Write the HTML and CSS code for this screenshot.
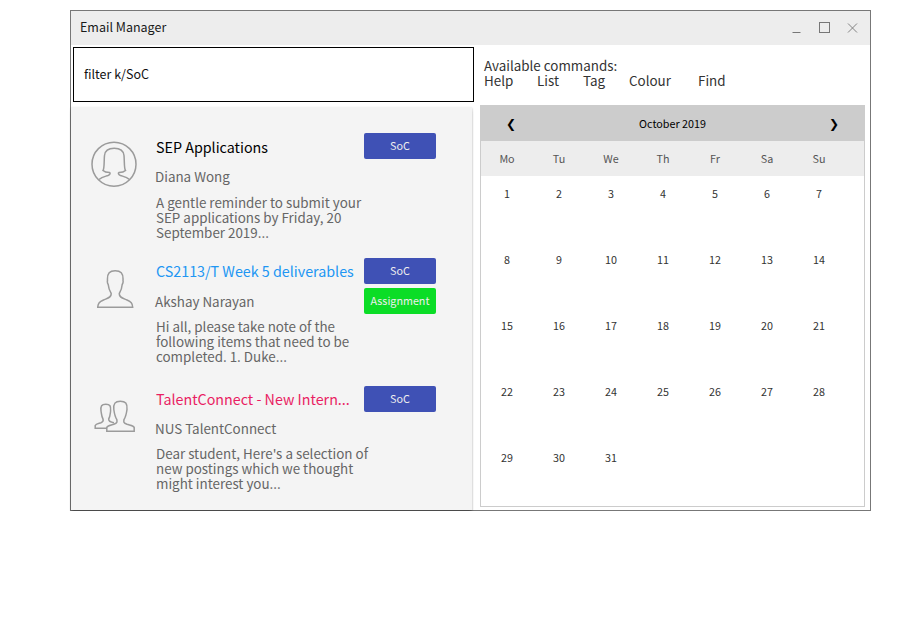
FILE: index.html
```
<!DOCTYPE html>
<html lang="en">
<head>
<meta charset="utf-8">
<title>Email Manager</title>
<link rel="stylesheet" href="styles.css">
</head>
<body>
<main class="window">
  <header class="titlebar">
    <span class="title">Email Manager</span>
    <svg class="controls" width="66" height="12" viewBox="0 0 66 12" fill="none" stroke="#777">
      <path d="M0.5 10.5H8.500"/>
      <rect x="27.500" y="0.500" width="10" height="10"/>
      <path d="M56 1.500L65 10.500M65 1.500L56 10.500" stroke-width="0.9"/>
    </svg>
  </header>
  <div class="content">
    <section class="left">
      <div class="command"><span>filter k/SoC</span></div>
      <div class="list">
        <article class="email first">
          <svg class="avatar round" width="46" height="46" viewBox="0 0 46 46">
            <circle cx="23" cy="23.200" r="22"/>
            <path d="M8 38.500C11 35.800 14 35.500 17 34.500C19.500 33.500 19.500 32 18.500 31.500Q14 31.500 12 29.500C13.500 28 13 19 13.500 14.500C14 9 17.500 7.200 23.200 7.200S32.500 9 33 14.500C33.500 19 33 28 34.500 29.500Q32.500 31.500 28 31.500C27 32 27 33.500 29.500 34.500C32.500 35.500 35.500 35.800 38.500 38.500"/>
          </svg>
          <div class="text">
            <h2>SEP Applications</h2>
            <p class="sender">Diana Wong</p>
            <p class="preview">A gentle reminder to submit your<br>SEP applications by Friday, 20<br>September 2019...</p>
          </div>
          <div class="tags"><span class="tag soc">SoC</span></div>
        </article>
        <article class="email second">
          <svg class="avatar person" width="38" height="40" viewBox="0 0 38 40">
            <path d="M0.700 38.300H35.700C35.500 34 34 32.800 30 31C26 29.200 22 28.500 22.300 24.500C24.500 21 25 18.500 25.200 15.500Q26.500 13.500 26 11.500C26.500 4 23.500 1.700 18.200 1.700S10 4 10.500 11.500Q10 13.500 11.200 15.500C11.500 18.500 12 21 14.200 24.500C14.500 28.500 10.500 29.200 6.500 31C2.500 32.800 1 34 0.700 38.300Z"/>
          </svg>
          <div class="text">
            <h2 class="blue">CS2113/T Week 5 deliverables</h2>
            <p class="sender">Akshay Narayan</p>
            <p class="preview">Hi all, please take note of the<br>following items that need to be<br>completed. 1. Duke...</p>
          </div>
          <div class="tags"><span class="tag soc">SoC</span><span class="tag assignment">Assignment</span></div>
        </article>
        <article class="email third">
          <svg class="avatar people" width="42" height="34" viewBox="0 0 42 34">
            <path d="M13 29.200H1.200V26.500C2 24.500 4.500 24.500 7 23.700C9.500 22.800 9.500 21.500 9 20C7.500 17.500 7.500 15 7 12C6.500 7 7.500 5.300 11.800 5.300S17 7 16.600 12C16.200 15 16.200 17.500 14.700 20C14.500 22 15.500 23 20 23.700"/>
            <path d="M12.800 32.200H40.200V28.500C39.500 26.500 36 26.300 33 25.300C29.500 24 29.500 23 30 20.500C32 17.500 32.500 14 33 10.500C33.500 4.500 31.500 2.200 26.300 2.200S19.300 4.500 19.800 10.500C20.300 14 20.800 17.500 22.800 20.500C23.300 23 23.300 24 19.800 25.300C17 26.300 13.500 26.500 12.800 28.500Z"/>
          </svg>
          <div class="text">
            <h2 class="pink">TalentConnect - New Intern...</h2>
            <p class="sender">NUS TalentConnect</p>
            <p class="preview">Dear student, Here's a selection of<br>new postings which we thought<br>might interest you...</p>
          </div>
          <div class="tags"><span class="tag soc">SoC</span></div>
        </article>
      </div>
    </section>
    <section class="right">
      <div class="help">
        <p>Available commands:</p>
        <nav><span>Help</span><span>List</span><span>Tag</span><span>Colour</span><span>Find</span></nav>
      </div>
      <div class="calendar">
        <div class="month">
          <span class="arrow">❮</span><span class="name">October 2019</span><span class="arrow">❯</span>
        </div>
        <div class="week"><span>Mo</span><span>Tu</span><span>We</span><span>Th</span><span>Fr</span><span>Sa</span><span>Su</span></div>
        <div class="days">
          <span>1</span><span>2</span><span>3</span><span>4</span><span>5</span><span>6</span><span>7</span>
          <span>8</span><span>9</span><span>10</span><span>11</span><span>12</span><span>13</span><span>14</span>
          <span>15</span><span>16</span><span>17</span><span>18</span><span>19</span><span>20</span><span>21</span>
          <span>22</span><span>23</span><span>24</span><span>25</span><span>26</span><span>27</span><span>28</span>
          <span>29</span><span>30</span><span>31</span>
        </div>
      </div>
    </section>
  </div>
</main>
</body>
</html>
```
FILE: styles.css
```
* { box-sizing: border-box; }
body {
  margin: 0;
  padding: 10px 0 0 70px;
  background: #fff;
  font-family: "Noto Sans CJK SC", "Noto Sans", sans-serif;
}
h2, p { margin: 0; font-weight: 400; white-space: nowrap; }
.window {
  width: 801px;
  height: 501px;
  border: 1px solid #777;
  display: flex;
  flex-direction: column;
}
.titlebar {
  height: 34px;
  flex: none;
  background: #ededed;
  display: flex;
  justify-content: space-between;
  padding: 0 12px 0 9px;
}
.title { font-size: 12.5px; line-height: 32px; color: #1a1a1a; }
.controls { margin-top: 11px; }
.content { display: flex; flex: 1; min-height: 0; }
.left { width: 403px; padding-top: 2px; display: flex; flex-direction: column; flex: none; }
.command {
  width: 401px;
  height: 55px;
  flex: none;
  margin-left: 2px;
  border: 1px solid #000;
  padding-left: 10px;
  font-size: 12.5px;
  line-height: 52px;
  color: #111;
}
.list {
  width: 401px;
  height: 403px;
  flex: none;
  margin-top: 5px;
  background: #f4f4f4;
  box-shadow: 0 1px 2px rgba(0, 0, 0, 0.25), 0 3px 3px -1px rgba(0, 0, 0, 0.3);
  padding: 26px 0 0 1px;
}
.email { display: flex; align-items: flex-start; }
.first { height: 125px; }
.second { height: 128px; }
.avatar { fill: none; stroke: #9b9b9b; stroke-width: 1.5; flex: none; }
.round { margin: 8px 18px 0 19px; }
.person { margin: 11px 20px 0 25px; }
.people { margin: 13px 19px 0 22px; }
.text { width: 209px; flex: none; }
.text h2 { font-size: 14.3px; line-height: 28px; padding-left: 1px; color: #000; }
.text .blue, .text .pink { line-height: 26px; }
.text .blue { color: #2196f3; }
.text .pink { color: #e91e63; }
.sender { font-size: 13.4px; line-height: 30px; color: #666; }
.preview { font-size: 13.4px; line-height: 15px; padding: 4px 0 0 1px; color: #666; }
.second .sender { padding-top: 2px; }
.second .preview { padding-top: 3px; }
.third .sender { padding-top: 1px; }
.third .preview { padding-top: 3px; }
.tags { display: flex; flex-direction: column; gap: 4px; }
.tag {
  width: 72px;
  height: 26px;
  border-radius: 2px;
  color: #eee;
  font-size: 10.75px;
  line-height: 25px;
  text-align: center;
}
.soc { background: #3f51b5; }
.assignment { background: #0bdd26; }
.right { flex: 1; padding: 13px 5px 0 6px; }
.help { height: 47px; padding-left: 4px; font-size: 13.4px; line-height: 15px; color: #333; }
.help nav { display: grid; grid-template-columns: 53px 46px 46px 69px auto; }
.calendar { width: 385px; height: 402px; border: 1px solid #ccc; font-size: 10.75px; color: #333; }
.month {
  height: 35px;
  background: #ccc;
  display: flex;
  justify-content: space-between;
  padding: 0 25px;
  line-height: 37px;
  color: #000;
}
.month .name { line-height: 36px; }
.arrow { font-family: "DejaVu Sans", sans-serif; font-size: 12px; }
.week, .days { display: grid; grid-template-columns: repeat(7, 52px); text-align: center; }
.week { height: 35px; line-height: 35px; background: #ededed; color: #555; }
.days { grid-auto-rows: 66px; line-height: 36px; }
```
